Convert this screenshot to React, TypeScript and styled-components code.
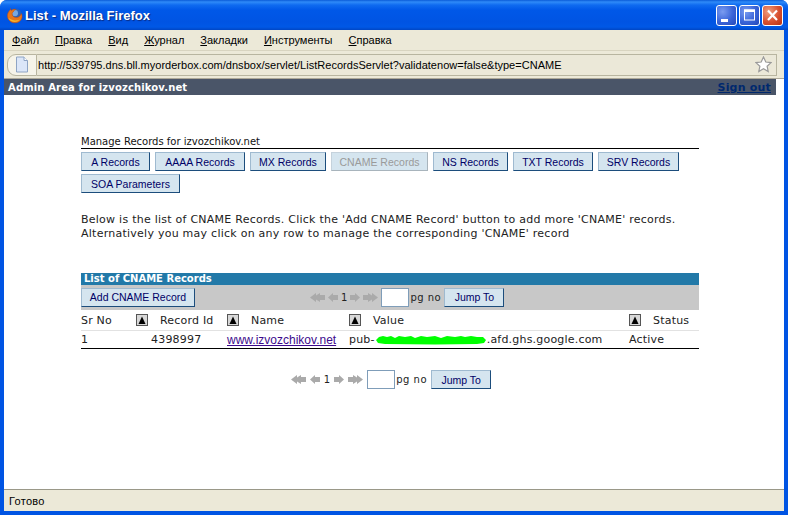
import React from 'react';
import styled, { createGlobalStyle } from 'styled-components';

const GlobalStyle = createGlobalStyle`
  html, body {
    margin: 0;
    padding: 0;
    background: #fff;
  }
  * {
    box-sizing: border-box;
  }
`;

const uiFont = `"Liberation Sans", Arial, sans-serif`;
const pageFont = `"DejaVu Sans", Verdana, sans-serif`;

const Window = styled.div`
  width: 788px;
  height: 515px;
  display: flex;
  flex-direction: column;
  overflow: hidden;
  background: #0054e3;
  border-radius: 7px 7px 0 0;
`;

const TitleBar = styled.div`
  height: 30px;
  flex: none;
  display: flex;
  align-items: center;
  padding: 0 5px 0 6px;
  background: linear-gradient(180deg, #0a5cd8 0, #2f8bf8 2px, #0f6bf0 5px, #0058e8 10px, #0054e3 22px, #0058e6 27px, #0046c4 30px);
`;

const Title = styled.div`
  flex: 1;
  margin-left: 2px;
  font: bold 13px ${uiFont};
  color: #fff;
  text-shadow: 1px 1px 1px #0a2a80;
`;

const Controls = styled.div`
  display: flex;
  gap: 2px;
`;

const ControlButton = styled.div<{ $close?: boolean }>`
  width: 21px;
  height: 21px;
  border: 1px solid #fff;
  border-radius: 3px;
  background: ${p => p.$close
    ? 'radial-gradient(circle at 30% 30%, #f0a080, #d85030 55%, #b83010)'
    : 'radial-gradient(circle at 30% 30%, #7a9cf0, #3a64d8 55%, #2448b8)'};
  svg {
    display: block;
  }
`;

const Body = styled.div`
  flex: 1;
  min-height: 0;
  display: flex;
  flex-direction: column;
  margin: 0 4px;
  background: #fff;
`;

const MenuBar = styled.div`
  height: 21px;
  flex: none;
  display: flex;
  align-items: center;
  gap: 16px;
  padding-left: 8px;
  background: #ece9d8;
  border-bottom: 1px solid #d8d4c0;
  font: 11px ${uiFont};
  color: #000;
  u {
    text-underline-offset: 1px;
  }
`;

const NavBar = styled.div`
  height: 28px;
  flex: none;
  display: flex;
  align-items: center;
  padding: 3px 7px 3px 3px;
  background: #ece9d8;
  border-bottom: 1px solid #aca899;
`;

const UrlBox = styled.div`
  flex: 1;
  height: 22px;
  display: flex;
  align-items: center;
  border: 1px solid #b8b5a0;
  border-left: none;
  background: #ebe8d8;
`;

const PageIconWrap = styled.div`
  width: 30px;
  height: 22px;
  margin-top: -1px;
  margin-bottom: -1px;
  flex: none;
  display: flex;
  align-items: center;
  justify-content: center;
  border: 1px solid #b8b5a0;
  border-radius: 9px 0 0 9px;
  background: #f6f4ea;
`;

const UrlText = styled.div`
  flex: 1;
  padding-left: 1px;
  font: 11px ${uiFont};
  letter-spacing: 0.02px;
  color: #000;
  white-space: nowrap;
`;

const StarIcon = styled.svg`
  margin-right: 4px;
`;

const AdminBar = styled.div`
  width: 772px;
  height: 16px;
  flex: none;
  display: flex;
  align-items: center;
  justify-content: space-between;
  padding: 0 5px 0 4px;
  background: #4a5568;
  font: bold 10px ${pageFont};
  letter-spacing: 0.14px;
  color: #fff;
`;

const SignOut = styled.a`
  font-size: 11px;
  color: #00286e;
  text-decoration: underline;
  letter-spacing: 0.2px;
`;

const Page = styled.div`
  flex: 1;
  min-height: 0;
  padding: 41px 0 0 77px;
  font: 11px ${pageFont};
  color: #222;
`;

const Section = styled.div`
  width: 618px;
`;

const ManageTitle = styled.div`
  height: 12px;
  line-height: 12px;
  border-bottom: 1px solid #000;
  box-sizing: content-box;
  font-size: 10px;
  color: #111;
`;

const TabRow = styled.div`
  display: flex;
  flex-wrap: wrap;
  gap: 3px 5px;
  margin-top: 3px;
`;

const Button = styled.button<{ $w: number; $off?: boolean }>`
  width: ${p => p.$w}px;
  height: 19px;
  padding: 0;
  background: #d5e5ef;
  border: 1px solid;
  border-color: #9fbad0 #1c4d7c #1c4d7c #9fbad0;
  font: 10.5px ${uiFont};
  color: ${p => (p.$off ? '#9a9a9a' : '#000066')};
  ${p => p.$off && 'border-color: #c5d2dc #a8b4bc #a8b4bc #c5d2dc;'}
`;

const Intro = styled.p`
  margin: 20px 0 0;
  font-size: 11px;
  line-height: 14px;
  letter-spacing: 0.25px;
  white-space: nowrap;
  color: #222;
`;

const ListHeader = styled.div`
  height: 12px;
  margin-top: 32px;
  padding-left: 3px;
  background: #2279a8;
  font: bold 10px/12px ${pageFont};
  color: #fff;
`;

const Toolbar = styled.div`
  height: 25px;
  display: flex;
  align-items: center;
  padding-bottom: 1px;
  background: #c8c8c8;
`;

const Pager = styled.div<{ $gap: number; $left?: number; $center?: boolean }>`
  display: flex;
  align-items: center;
  gap: ${p => p.$gap}px;
  margin-left: ${p => p.$left ?? 0}px;
  ${p => p.$center && 'justify-content: center; margin-top: 21px; padding-left: 2px;'}
  font-size: 10px;
  color: #222;
`;

const PageInput = styled.input`
  width: 28px;
  height: 19px;
  padding: 0;
  border: 1px solid #7f9db9;
  background: #fff;
`;

const PgNo = styled.span<{ $gap: number }>`
  width: 31px;
  margin-left: ${p => 1 - p.$gap}px;
  letter-spacing: 0.5px;
  white-space: nowrap;
`;

const Grid = styled.div`
  display: grid;
  grid-template-columns: 70px 76px 122px 280px 70px;
  font-size: 11px;
  letter-spacing: 0.2px;
  color: #222;
`;

const HeadCell = styled.div<{ $indent?: number; $between?: boolean }>`
  height: 21px;
  display: flex;
  align-items: center;
  justify-content: ${p => (p.$between ? 'space-between' : 'flex-start')};
  gap: 12px;
  padding-left: ${p => p.$indent ?? 0}px;
  padding-right: ${p => (p.$between ? 3 : 0)}px;
  border-bottom: 1px solid #e2e2e2;
`;

const Cell = styled.div`
  height: 18px;
  display: flex;
  align-items: center;
  border-bottom: 1px solid #000;
`;

const RecordLink = styled.a`
  font: 12px ${uiFont};
  letter-spacing: 0;
  color: #3c0a8c;
  text-decoration: underline;
`;

const StatusBar = styled.div`
  height: 22px;
  flex: none;
  display: flex;
  align-items: center;
  padding-left: 5px;
  background: #ece9d8;
  border-top: 1px solid #9a9888;
  font: 11px ${uiFont};
  letter-spacing: 0.3px;
  color: #000;
`;

const BottomEdge = styled.div`
  height: 4px;
  flex: none;
`;

const FirefoxIcon = () => (
  <svg width="17" height="17" viewBox="0 0 18 18">
    <circle cx="10" cy="8" r="6.500" fill="#2a62b8" />
    <circle cx="9.500" cy="6.500" r="3.200" fill="#7aa8e0" />
    <path d="M5 1.500c-.2 1 .1 1.800.7 2.300C6.800 2.600 8.600 2.200 10.500 2.600 9 3 8 4 7.800 5.200c-.8.300-1.300 1-1.300 2 0 2.300 2 4 4.500 4 2.600 0 4.600-1.800 5.200-4.200 .6 1 .8 2 .8 3 0 3.800-3.200 6.800-7.500 6.800-4.400 0-8-3.300-8-7.600 0-2.400 1.200-4.400 3.500-6.700z" fill="#e8761a" stroke="#c04a10" strokeWidth=".5" />
    <path d="M2.500 11.500c1 2.600 3.500 4.300 6.500 4.300 2.400 0 4.500-1 5.700-2.800-1.400 1-3.400 1.400-5.400 1.200-2.800-.4-4.700-1.200-6.800-2.700z" fill="#f6b62c" />
  </svg>
);

const MinimizeIcon = () => (
  <svg width="19" height="19" viewBox="0 0 19 19">
    <rect x="4" y="13" width="7" height="3" fill="#fff" />
  </svg>
);

const MaximizeIcon = () => (
  <svg width="19" height="19" viewBox="0 0 19 19">
    <rect x="4.500" y="4" width="10" height="10" fill="none" stroke="#fff" />
    <rect x="4" y="3.500" width="11" height="2.500" fill="#fff" />
  </svg>
);

const CloseIcon = () => (
  <svg width="19" height="19" viewBox="0 0 19 19">
    <path d="M5 4.500l9 9.500M14 4.500l-9 9.500" stroke="#fff" strokeWidth="2.200" />
  </svg>
);

const PageIcon = () => (
  <svg width="14" height="17" viewBox="0 0 14 17">
    <path d="M1.500 1h7.500l3.500 3.500v11.500h-11z" fill="#dbe6f8" stroke="#8ea4c4" />
    <path d="M9 1v3.500h3.500" fill="#fff" stroke="#8ea4c4" />
  </svg>
);

const Arrow = ({ dir, double }: { dir: 'left' | 'right'; double?: boolean }) => {
  const w = double ? 15 : 10;
  const d = double
    ? 'M0 4.500L6 0V2.500L10 0V2H15V7H10V9L6 6.500V9z'
    : 'M0 4.500L5 0V2H10V7H5V9z';
  return (
    <svg width={w} height="9" viewBox={`0 0 ${w} 9`}>
      <path d={d} fill="#aaa" transform={dir === 'right' ? `matrix(-1 0 0 1 ${w} 0)` : undefined} />
    </svg>
  );
};

const SortIcon = () => (
  <svg width="12" height="12" viewBox="0 0 12 12">
    <rect width="12" height="12" fill="#555" />
    <rect x="1" y="1" width="10" height="10" fill="#d8d8d8" />
    <path d="M6 2.500L9.500 10h-7z" fill="#000" />
  </svg>
);

// green scribble that hides part of the hostname in the screenshot
const Scribble = () => (
  <svg width="112" height="10" viewBox="0 0 112 10">
    <path
      d="M1 5L4 2L8 1L12 2L16 1L20 3L24 1L30 2L36 1L40 3L46 1L52 2L60 1L66 3L72 1L80 2L86 1L90 2L96 1L102 2L108 2L111 5L109 8L102 9L60 9.500L10 9L3 8z"
      fill="#00ff00"
    />
  </svg>
);

const PagerControls = ({ gap, left, center }: { gap: number; left?: number; center?: boolean }) => (
  <Pager $gap={gap} $left={left} $center={center}>
    <Arrow dir="left" double />
    <Arrow dir="left" />
    <span>1</span>
    <Arrow dir="right" />
    <Arrow dir="right" double />
    <PageInput />
    <PgNo $gap={gap}>pg no</PgNo>
    <Button $w={60}>Jump To</Button>
  </Pager>
);

const tabs = [
  { label: 'A Records', width: 69 },
  { label: 'AAAA Records', width: 90 },
  { label: 'MX Records', width: 76 },
  { label: 'CNAME Records', width: 97, off: true },
  { label: 'NS Records', width: 75 },
  { label: 'TXT Records', width: 80 },
  { label: 'SRV Records', width: 81 },
  { label: 'SOA Parameters', width: 99 },
];

const menus = [
  ['Ф', 'айл'],
  ['П', 'равка'],
  ['В', 'ид'],
  ['Ж', 'урнал'],
  ['З', 'акладки'],
  ['И', 'нструменты'],
  ['С', 'правка'],
];

export default function App() {
  return (
    <>
      <GlobalStyle />
      <Window>
        <TitleBar>
          <FirefoxIcon />
          <Title>List - Mozilla Firefox</Title>
          <Controls>
            <ControlButton><MinimizeIcon /></ControlButton>
            <ControlButton><MaximizeIcon /></ControlButton>
            <ControlButton $close><CloseIcon /></ControlButton>
          </Controls>
        </TitleBar>
        <Body>
          <MenuBar>
            {menus.map(([first, rest]) => (
              <span key={first}><u>{first}</u>{rest}</span>
            ))}
          </MenuBar>
          <NavBar>
            <PageIconWrap><PageIcon /></PageIconWrap>
            <UrlBox>
              <UrlText>http://539795.dns.bll.myorderbox.com/dnsbox/servlet/ListRecordsServlet?validatenow=false&amp;type=CNAME</UrlText>
              <StarIcon width="17" height="17" viewBox="0 0 17 17">
                <path d="M8.500 1l2.300 5 5.200.6-3.900 3.600 1.100 5.300-4.700-2.700-4.700 2.700 1.100-5.300L1 6.600 6.200 6z" fill="#fff" stroke="#9a9a9a" strokeWidth="1.200" />
              </StarIcon>
            </UrlBox>
          </NavBar>
          <AdminBar>
            <span>Admin Area for izvozchikov.net</span>
            <SignOut href="#">Sign out</SignOut>
          </AdminBar>
          <Page>
            <Section>
              <ManageTitle>Manage Records for izvozchikov.net</ManageTitle>
              <TabRow>
                {tabs.map(tab => (
                  <Button key={tab.label} $w={tab.width} $off={tab.off}>{tab.label}</Button>
                ))}
              </TabRow>
              <Intro>
                Below is the list of CNAME Records. Click the 'Add CNAME Record' button to add more 'CNAME' records.
                <br />
                Alternatively you may click on any row to manage the corresponding 'CNAME' record
              </Intro>
              <ListHeader>List of CNAME Records</ListHeader>
              <Toolbar>
                <Button $w={114}>Add CNAME Record</Button>
                <PagerControls gap={3} left={115} />
              </Toolbar>
              <Grid>
                <HeadCell $between>Sr No<SortIcon /></HeadCell>
                <HeadCell $indent={9}>Record Id</HeadCell>
                <HeadCell><SortIcon />Name</HeadCell>
                <HeadCell><SortIcon />Value</HeadCell>
                <HeadCell><SortIcon />Status</HeadCell>
                <Cell>1</Cell>
                <Cell>4398997</Cell>
                <Cell><RecordLink href="#">www.izvozchikov.net</RecordLink></Cell>
                <Cell>pub-<Scribble />.afd.ghs.google.com</Cell>
                <Cell>Active</Cell>
              </Grid>
              <PagerControls gap={4} center />
            </Section>
          </Page>
          <StatusBar>Готово</StatusBar>
        </Body>
        <BottomEdge />
      </Window>
    </>
  );
}
